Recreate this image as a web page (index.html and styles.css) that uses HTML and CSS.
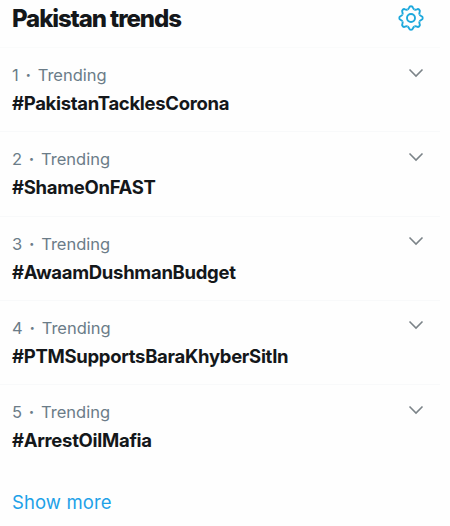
FILE: index.html
```html
<!DOCTYPE html>
<html lang="en">
<head>
  <meta charset="UTF-8">
  <title>Pakistan trends</title>
  <link rel="stylesheet" href="styles.css">
</head>
<body>
  <section class="trends">
    <header class="trends-header">
      <h2>Pakistan trends</h2>
      <svg class="gear" viewBox="-13 -13 26 26">
        <defs>
          <path id="tooth" d="M-3.5 -8.5C-2.5 -8.9 -2.2 -9.6 -1.9 -10.4C-1.6 -11.4 -1 -11.7 0 -11.7C1 -11.7 1.6 -11.4 1.9 -10.4C2.2 -9.6 2.5 -8.9 3.5 -8.5"/>
        </defs>
        <use href="#tooth"/>
        <use href="#tooth" transform="rotate(45)"/>
        <use href="#tooth" transform="rotate(90)"/>
        <use href="#tooth" transform="rotate(135)"/>
        <use href="#tooth" transform="rotate(180)"/>
        <use href="#tooth" transform="rotate(225)"/>
        <use href="#tooth" transform="rotate(270)"/>
        <use href="#tooth" transform="rotate(315)"/>
        <circle r="4"/>
      </svg>
    </header>

    <div class="trend">
      <div class="trend-text">
        <p class="meta"><span>1</span><span class="dot">·</span><span>Trending</span></p>
        <p class="tag">#PakistanTacklesCorona</p>
      </div>
      <svg class="chevron" viewBox="0 0 16 10"><path d="M1.5 1.5L8 8L14.5 1.5"/></svg>
    </div>
    <div class="trend">
      <div class="trend-text">
        <p class="meta"><span>2</span><span class="dot">·</span><span>Trending</span></p>
        <p class="tag">#ShameOnFAST</p>
      </div>
      <svg class="chevron" viewBox="0 0 16 10"><path d="M1.5 1.5L8 8L14.5 1.5"/></svg>
    </div>
    <div class="trend">
      <div class="trend-text">
        <p class="meta"><span>3</span><span class="dot">·</span><span>Trending</span></p>
        <p class="tag">#AwaamDushmanBudget</p>
      </div>
      <svg class="chevron" viewBox="0 0 16 10"><path d="M1.5 1.5L8 8L14.5 1.5"/></svg>
    </div>
    <div class="trend">
      <div class="trend-text">
        <p class="meta"><span>4</span><span class="dot">·</span><span>Trending</span></p>
        <p class="tag">#PTMSupportsBaraKhyberSitIn</p>
      </div>
      <svg class="chevron" viewBox="0 0 16 10"><path d="M1.5 1.5L8 8L14.5 1.5"/></svg>
    </div>
    <div class="trend">
      <div class="trend-text">
        <p class="meta"><span>5</span><span class="dot">·</span><span>Trending</span></p>
        <p class="tag">#ArrestOilMafia</p>
      </div>
      <svg class="chevron" viewBox="0 0 16 10"><path d="M1.5 1.5L8 8L14.5 1.5"/></svg>
    </div>

    <a class="show-more">Show more</a>
  </section>
</body>
</html>
```

FILE: styles.css
```css
* {
  box-sizing: border-box;
}

body {
  margin: 0;
  background: #fefefe;
  font-family: Inter, "Liberation Sans", sans-serif;
  color: #14171a;
}

.trends {
  width: 440px;
}

.trends-header {
  display: flex;
  justify-content: space-between;
  align-items: flex-start;
  height: 48px;
  padding: 5px 16px 0 12px;
  border-bottom: 1px solid #fafbfb;
}

h2 {
  margin: 0;
  font-size: 24px;
  line-height: 28px;
  font-weight: 800;
  letter-spacing: -1.1px;
}

.gear {
  width: 26px;
  height: 26px;
  fill: none;
  stroke: #1da8dc;
  stroke-width: 1.9;
}

.trend {
  display: flex;
  justify-content: space-between;
  align-items: flex-start;
  height: 84.3px;
  padding: 15px 16.5px 0 12px;
  border-bottom: 1px solid #f8f9fa;
}

.trend:nth-last-child(2) {
  border-bottom: none;
}

.meta {
  display: flex;
  margin: 0;
  font-size: 16.5px;
  line-height: 24px;
  color: #6b7c88;
}

.dot {
  width: 19px;
  text-align: center;
  font-weight: 700;
}

.tag {
  margin: 3px 0 0;
  font-size: 18.5px;
  line-height: 26px;
  font-weight: 700;
  letter-spacing: -0.3px;
}

.chevron {
  width: 16px;
  height: 10px;
  margin-top: 4.5px;
  fill: none;
  stroke: #7b8388;
  stroke-width: 1.6;
}

.show-more {
  display: block;
  padding: 20.5px 12px 0;
  font-size: 18.5px;
  line-height: 24px;
  letter-spacing: 0.1px;
  color: #1da1e8;
}
```
